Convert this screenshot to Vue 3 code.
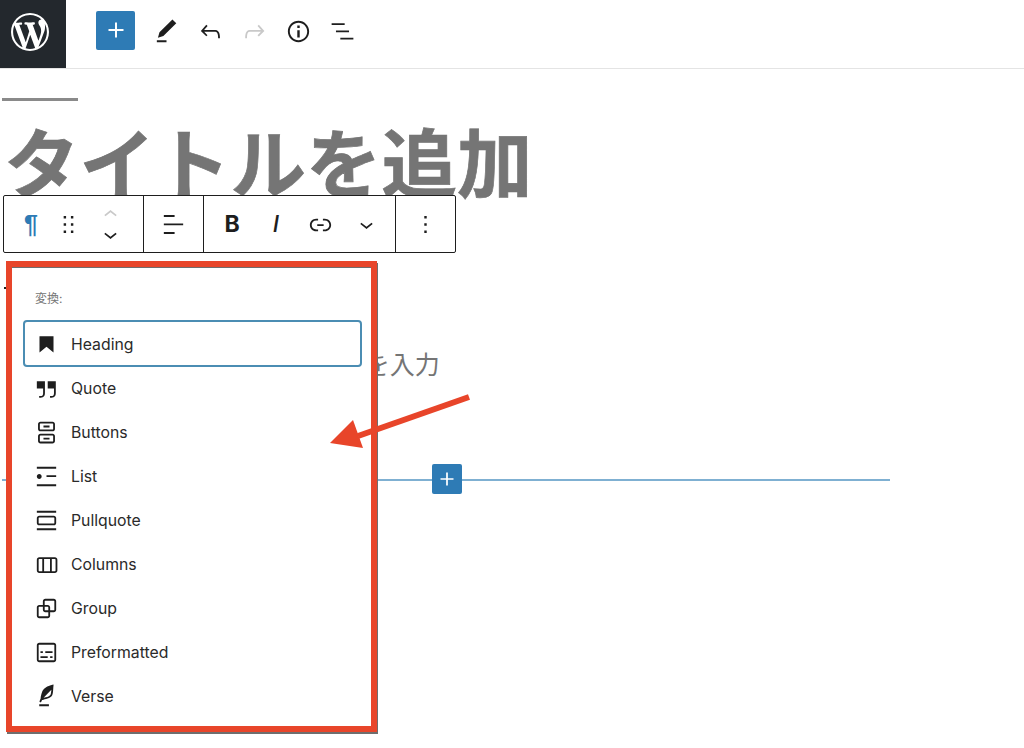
<script setup>
const head = [
  { d: 'M20.1 5.1L16.9 2 6.2 12.7l-1.3 4.4 4.5-1.3L20.1 5.1zM4 20.8h8v-1.5H4v1.5z' },
  { d: 'M18.3 11.7c-.6-.6-1.4-.9-2.3-.9H6.7l2.9-3.3-1.1-1-4.5 5L8.5 16l1-1-2.7-2.7H16c.5 0 .9.2 1.3.5 1 1 1 3.4 1 4.5v.3h1.5v-.2c0-1.5 0-4.3-1.5-5.7z' },
  { d: 'M15.6 6.5l-1.1 1 2.9 3.3H8c-.9 0-1.7.3-2.3.9-1.4 1.5-1.4 4.2-1.4 5.6v.2h1.5v-.3c0-1.1 0-3.5 1-4.5.3-.3.7-.5 1.3-.5h9.2L14.5 15l1.1 1.1 4.6-4.6-4.6-5z', off: true },
  { d: 'M12 3.2c-4.8 0-8.8 3.9-8.8 8.8 0 4.8 3.9 8.8 8.8 8.8 4.8 0 8.8-3.9 8.8-8.8 0-4.8-4-8.8-8.8-8.8zm0 16c-4 0-7.2-3.3-7.2-7.2C4.8 8 8 4.8 12 4.8s7.2 3.3 7.2 7.2c0 4-3.2 7.2-7.2 7.2zM11 17h2v-6h-2v6zm0-8h2V7h-2v2z' },
  { d: 'M13.8 5.2H3v1.5h10.8V5.2zm-3.6 12v1.5H21v-1.5H10.2zm7.2-6H6.6v1.5h10.8v-1.5z' }
]
const items = [
  { label: 'Heading', focus: true, d: 'M6.2 5.2v13.4l5.8-4.8 5.8 4.8V5.2z' },
  { label: 'Quote', d: 'M13 6v6h5.2v4c0 .8-.2 1.4-.5 1.7-.6.6-1.6.6-2.5.5h-.3v1.5h.5c1 0 2.3-.1 3.3-1 .6-.6 1-1.6 1-2.8V6H13zm-9 6h5.2v4c0 .8-.2 1.4-.5 1.7-.6.6-1.6.6-2.5.5h-.3v1.5h.5c1 0 2.3-.1 3.3-1 .6-.6 1-1.6 1-2.8V6H4v6z' },
  { label: 'Buttons', d: 'M17 3H7c-1.1 0-2 .9-2 2v4c0 1.1.9 2 2 2h10c1.1 0 2-.9 2-2V5c0-1.1-.9-2-2-2zm.5 6c0 .3-.2.5-.5.5H7c-.3 0-.5-.2-.5-.5V5c0-.3.2-.5.5-.5h10c.3 0 .5.2.5.5v4zm-8-1.2h5V6.2h-5v1.6zM17 13H7c-1.1 0-2 .9-2 2v4c0 1.1.9 2 2 2h10c1.1 0 2-.9 2-2v-4c0-1.1-.9-2-2-2zm.5 6c0 .3-.2.5-.5.5H7c-.3 0-.5-.2-.5-.5v-4c0-.3.2-.5.5-.5h10c.3 0 .5.2.5.5v4zm-8-1.2h5v-1.5h-5v1.5z' },
  { label: 'List', d: 'M4 4v1.5h16V4H4zm8 8.5h8V11h-8v1.5zM4 20h16v-1.5H4V20zm4-8c0-1.1-.9-2-2-2s-2 .9-2 2 .9 2 2 2 2-.9 2-2z' },
  { label: 'Pullquote', d: 'M18 8H6c-1.1 0-2 .9-2 2v4c0 1.1.9 2 2 2h12c1.1 0 2-.9 2-2v-4c0-1.1-.9-2-2-2zm.5 6c0 .3-.2.5-.5.5H6c-.3 0-.5-.2-.5-.5v-4c0-.3.2-.5.5-.5h12c.3 0 .5.2.5.5v4zM4 4v1.5h16V4H4zm0 16h16v-1.5H4V20z' },
  { label: 'Columns', d: 'M19 6H6c-1.1 0-2 .9-2 2v9c0 1.1.9 2 2 2h13c1.1 0 2-.9 2-2V8c0-1.1-.9-2-2-2zm-4.1 1.5v10H10v-10h4.9zM5.5 17V8c0-.3.2-.5.5-.5h2.5v10H6c-.3 0-.5-.2-.5-.5zm14 0c0 .3-.2.5-.5.5h-2.6v-10H19c.3 0 .5.2.5.5v9z' },
  { label: 'Group', d: 'M18 4h-7c-1.1 0-2 .9-2 2v3H6c-1.1 0-2 .9-2 2v7c0 1.1.9 2 2 2h7c1.1 0 2-.9 2-2v-3h3c1.1 0 2-.9 2-2V6c0-1.1-.9-2-2-2zm-4.5 14c0 .3-.2.5-.5.5H6c-.3 0-.5-.2-.5-.5v-7c0-.3.2-.5.5-.5h3V13c0 1.1.9 2 2 2h2.5v3zm0-4.5H11c-.3 0-.5-.2-.5-.5v-2.5H13c.3 0 .5.2.5.5v2.5zm5-.5c0 .3-.2.5-.5.5h-3V11c0-1.1-.9-2-2-2h-2.5V6c0-.3.2-.5.5-.5h7c.3 0 .5.2.5.5v7z' },
  { label: 'Preformatted', d: 'M18 4H6c-1.1 0-2 .9-2 2v12c0 1.1.9 2 2 2h12c1.1 0 2-.9 2-2V6c0-1.1-.9-2-2-2zm.5 14c0 .3-.2.5-.5.5H6c-.3 0-.5-.2-.5-.5V6c0-.3.2-.5.5-.5h12c.3 0 .5.2.5.5v12zM7 16.5h6V15H7v1.5zm4-4h6V11h-6v1.5zM9 11H7v1.5h2V11zm6 5.5h2V15h-2v1.5z' },
  { label: 'Verse', d: 'M17.8 2l-.9.3c-.1 0-3.6 1-5.2 2.1C10 5.5 9.3 6.5 8.9 7.1c-.6.9-1.7 4.7-1.7 6.3l-.9 2.3c-.2.4 0 .8.4 1 .1 0 .2.1.3.1.3 0 .6-.2.7-.5l.6-1.5c.3 0 .7-.1 1.2-.2.7-.1 1.4-.3 2.2-.5.8-.2 1.6-.5 2.4-.8.7-.3 1.4-.7 1.9-1.2s.8-1.2 1-1.9c.2-.7.3-1.6.4-2.4.1-.8.1-1.7.2-2.5 0-.8.1-1.5.2-2.1V2zm-1.9 5.6c-.1.8-.2 1.5-.3 2.1-.2.6-.4 1-.6 1.3-.3.3-.8.6-1.4.9-.7.3-1.4.5-2.2.8-.6.2-1.3.3-1.8.4L15 7.5c.3-.3.6-.7 1-1.1 0 .4 0 .8-.1 1.2zM6 20h8v-1.5H6V20z' }
]
const plus = 'M18 11.2h-5.2V6h-1.6v5.2H6v1.6h5.2V18h1.6v-5.2H18z'
const logo = 'M20 10c0-5.51-4.49-10-10-10C4.48 0 0 4.49 0 10c0 5.52 4.48 10 10 10 5.51 0 10-4.48 10-10zM7.78 15.37L4.37 6.22c.55-.02 1.17-.08 1.17-.08.5-.06.44-1.13-.06-1.11 0 0-1.45.11-2.37.11-.18 0-.37 0-.58-.01C4.12 2.69 6.87 1.11 10 1.11c2.33 0 4.45.87 6.05 2.34-.68-.11-1.65.39-1.65 1.58 0 .74.45 1.36.9 2.1.35.61.55 1.36.55 2.46 0 1.49-1.4 5-1.4 5l-3.03-8.37c.54-.02.82-.17.82-.17.5-.05.44-1.25-.06-1.22 0 0-1.44.12-2.38.12-.87 0-2.33-.12-2.33-.12-.5-.03-.56 1.2-.06 1.22l.92.08 1.26 3.41zM17.41 10c.24-.64.74-1.87.43-4.25.7 1.29 1.05 2.71 1.05 4.25 0 3.29-1.73 6.24-4.4 7.78.97-2.59 1.94-5.2 2.92-7.78zM6.1 18.09C3.12 16.65 1.11 13.53 1.11 10c0-1.3.23-2.48.72-3.59C3.25 10.3 4.67 14.2 6.1 18.09zm4.03-6.63l2.58 6.98c-.86.29-1.76.45-2.71.45-.79 0-1.57-.11-2.29-.33.81-2.38 1.62-4.74 2.42-7.1z'
</script>

<template>
  <div class="page">
    <header class="topbar">
      <div class="logo">
        <svg viewBox="0 0 20 20" width="38" height="38"><path :d="logo" fill="#fff" /></svg>
      </div>
      <div class="add">
        <svg viewBox="0 0 24 24" width="30" height="30"><path :d="plus" fill="#fff" /></svg>
      </div>
      <div class="head-tools">
        <span v-for="(h, i) in head" :key="i" class="head-btn" :class="{ off: h.off }">
          <svg viewBox="0 0 24 24" width="29" height="29"><path :d="h.d" fill="currentColor" /></svg>
        </span>
      </div>
    </header>

    <main class="editor">
      <div class="rule"></div>
      <h1 class="title">タイトルを追加</h1>
      <p class="placeholder">ブロックを選択するには「/」を入力</p>
      <div class="inserter">
        <span class="small-add">
          <svg viewBox="0 0 24 24" width="26" height="26"><path :d="plus" fill="#fff" /></svg>
        </span>
      </div>
    </main>

    <div class="toolbar">
      <div class="group g1">
        <span class="para">¶</span>
        <svg class="ic drag" viewBox="0 0 24 24" width="29" height="29"><path d="M8 7h2V5H8v2zm0 6h2v-2H8v2zm0 6h2v-2H8v2zm6-14v2h2V5h-2zm0 8h2v-2h-2v2zm0 6h2v-2h-2v2z" /></svg>
        <span class="mover">
          <svg class="up" viewBox="0 0 24 24" width="27" height="27"><path d="M6.5 12.4L12 8l5.5 4.4-.9 1.2L12 10l-4.5 3.6-1-1.2z" /></svg>
          <svg viewBox="0 0 24 24" width="27" height="27"><path d="M17.5 11.6L12 16l-5.5-4.4.9-1.2L12 14l4.5-3.6 1 1.2z" /></svg>
        </span>
      </div>
      <div class="group g2">
        <svg viewBox="0 0 24 24" width="29" height="29"><path d="M4 19.8h8.9v-1.5H4v1.5zm8.9-15.6H4v1.5h8.9V4.2zm-8.9 7v1.5h16v-1.5H4z" /></svg>
      </div>
      <div class="group g3">
        <span class="fmt bold">B</span>
        <span class="fmt ital">I</span>
        <span class="fmt">
          <svg viewBox="0 0 24 24" width="29" height="29"><path d="M15.6 7.2H14v1.5h1.6c2 0 3.7 1.7 3.7 3.7s-1.7 3.7-3.7 3.7H14v1.5h1.6c2.8 0 5.2-2.3 5.2-5.2 0-2.9-2.3-5.2-5.2-5.2zM4.7 12.4c0-2 1.7-3.7 3.7-3.7H10V7.2H8.4c-2.9 0-5.2 2.3-5.2 5.2 0 2.9 2.3 5.2 5.2 5.2H10v-1.5H8.4c-2 0-3.7-1.7-3.7-3.7zm4.6.9h5.3v-1.5H9.3v1.5z" /></svg>
        </span>
        <span class="fmt chev">
          <svg viewBox="0 0 24 24" width="27" height="27"><path d="M17.5 11.6L12 16l-5.5-4.4.9-1.2L12 14l4.5-3.6 1 1.2z" /></svg>
        </span>
      </div>
      <div class="group g4">
        <svg viewBox="0 0 24 24" width="29" height="29"><path d="M13 19h-2v-2h2v2zm0-6h-2v-2h2v2zm0-6h-2V5h2v2z" /></svg>
      </div>
    </div>

    <span class="mark"></span>

    <section class="popover">
      <div class="pop-inner">
        <div class="pop-label">変換:</div>
        <ul class="list">
          <li v-for="it in items" :key="it.label" class="row" :class="{ focus: it.focus }">
            <svg viewBox="0 0 24 24" width="29" height="29"><path :d="it.d" fill="#1e1e1e" /></svg>
            <span>{{ it.label }}</span>
          </li>
        </ul>
      </div>
    </section>

    <svg class="arrow" viewBox="0 0 150 60" width="150" height="60">
      <line x1="139" y1="7" x2="28" y2="46" stroke="#e8452a" stroke-width="6" />
      <polygon points="0,53 23,30 33,58" fill="#e8452a" />
    </svg>
  </div>
</template>

<style>
html, body { margin: 0; background: #fff; }
</style>

<style scoped>
.page {
  position: relative;
  width: 1024px;
  height: 748px;
  overflow: hidden;
  background: #fff;
  font-family: "Inter", "Noto Sans CJK JP", sans-serif;
  color: #1e1e1e;
}
.topbar {
  display: flex;
  align-items: center;
  height: 69px;
  border-bottom: 1px solid #e4e4e4;
  box-sizing: border-box;
}
.logo {
  width: 66px;
  height: 68px;
  padding: 0 7px 5px 0;
  box-sizing: border-box;
  background: #23282d;
  display: flex;
  align-items: center;
  justify-content: center;
  flex: none;
}
.add {
  width: 39px;
  height: 39px;
  margin: -8px 0 0 30px;
  background: #2e7bb5;
  border-radius: 2px;
  display: flex;
  align-items: center;
  justify-content: center;
  flex: none;
}
.head-tools { display: flex; margin: -6px 0 0 9px; }
.head-btn {
  width: 44px;
  display: flex;
  justify-content: center;
  color: #1e1e1e;
}
.head-btn.off { color: #c9c9c9; }

.editor { padding-top: 29px; }
.rule { width: 76px; height: 3px; margin-left: 2px; background: #8a8a8a; }
.title {
  margin: 13px 0 0 4px;
  font: 700 75.5px/90px "Noto Sans CJK JP", sans-serif;
  -webkit-text-stroke: 0.7px #757575;
  color: #757575;
  white-space: nowrap;
}
.placeholder {
  margin: 141px 0 0;
  padding-left: 30px;
  font: 400 25px/36px "Noto Sans CJK JP", sans-serif;
  color: #757575;
  white-space: nowrap;
}
.inserter {
  position: relative;
  margin: 98px 0 0 2px;
  width: 888px;
  height: 2px;
  background: #7fb0d2;
}
.small-add {
  position: absolute;
  left: 430px;
  top: -15px;
  width: 30px;
  height: 30px;
  background: #2e7bb5;
  border-radius: 2px;
  display: flex;
  align-items: center;
  justify-content: center;
}

.toolbar {
  position: absolute;
  left: 3px;
  top: 195px;
  width: 453px;
  height: 58px;
  box-sizing: border-box;
  display: flex;
  background: #fff;
  border: 1px solid #1e1e1e;
  border-radius: 2px;
}
.toolbar svg { fill: #1e1e1e; flex: none; }
.group {
  display: flex;
  align-items: center;
  box-sizing: border-box;
  border-right: 1px solid #1e1e1e;
}
.g1 { width: 140px; }
.g2 { width: 60px; justify-content: center; }
.g3 { width: 192px; padding-left: 6px; }
.g4 { flex: 1; border-right: 0; justify-content: center; }
.para {
  width: 28px;
  margin-left: 13px;
  text-align: center;
  font: 700 25px/1 "Liberation Sans", sans-serif;
  color: #2e7bb5;
}
.drag { margin-left: 9px; }
.mover {
  display: flex;
  flex-direction: column;
  margin-left: 14px;
}
.mover svg { margin: -3.5px 0; }
.toolbar .mover .up { fill: #c9c9c9; }
.fmt {
  width: 44px;
  display: flex;
  justify-content: center;
  align-items: center;
  font-family: "Inter", sans-serif;
  font-size: 23px;
  line-height: 1;
}
.chev { margin-left: 2px; }
.bold { font-weight: 700; }
.ital { font-style: italic; font-weight: 500; }

.mark {
  position: absolute;
  left: 4px;
  top: 287px;
  width: 2px;
  height: 2px;
  background: #1e1e1e;
}

.popover {
  position: absolute;
  left: 6px;
  top: 261px;
  width: 371px;
  height: 471px;
  box-sizing: border-box;
  border: 6px solid #e8452a;
  box-shadow: 1px 2px 0 #6e6e6e;
  background: #fff;
}
.pop-inner {
  height: 100%;
  box-sizing: border-box;
  border-top: 1px solid #6e6e6e;
  padding: 0 9px 0 11px;
}
.pop-label {
  margin: 23px 0 0 12px;
  font-size: 12px;
  line-height: 16px;
  color: #757575;
}
.list {
  list-style: none;
  margin: 14px 0 0;
  padding: 0;
}
.row {
  display: flex;
  align-items: center;
  gap: 10px;
  height: 44px;
  padding-left: 9px;
  box-sizing: border-box;
  font-size: 15.8px;
  color: #2a2a2a;
}
.row.focus {
  height: 47px;
  margin-bottom: -1px;
  margin-top: -1px;
  padding: 1px 0 0 7px;
  border: 2px solid #4b8db3;
  border-radius: 4px;
}
.arrow {
  position: absolute;
  left: 330px;
  top: 390px;
}
</style>
